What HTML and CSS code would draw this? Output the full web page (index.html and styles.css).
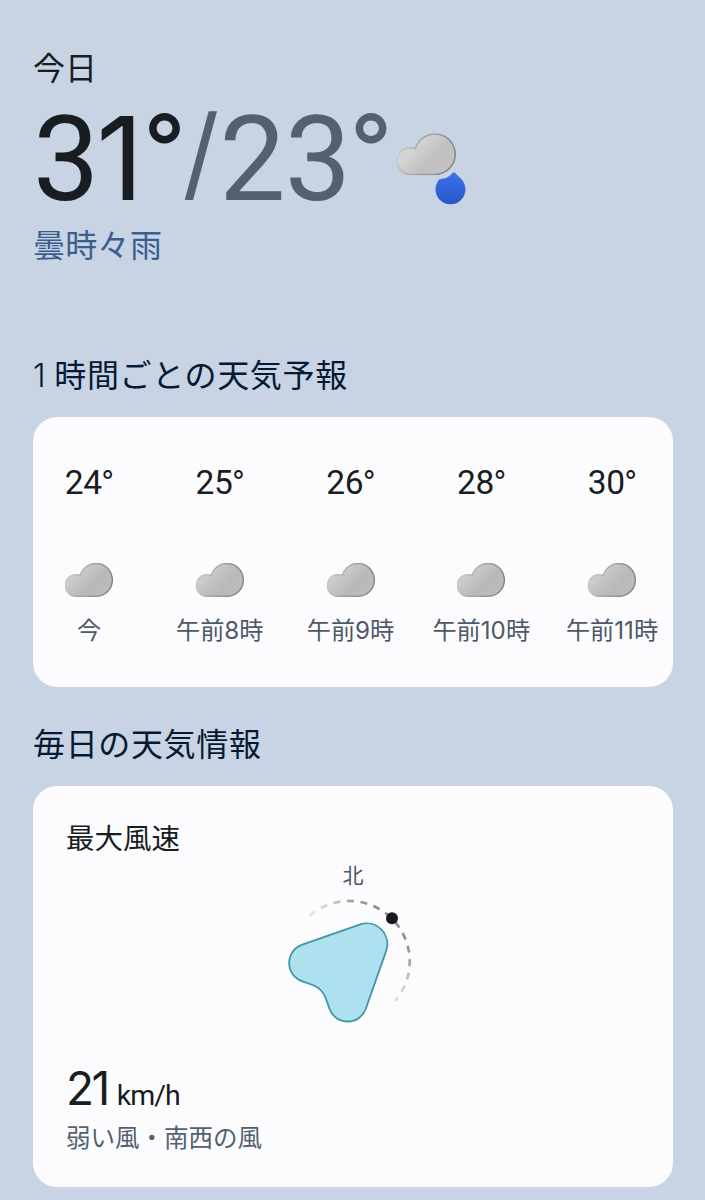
FILE: index.html
```
<!DOCTYPE html>
<html lang="ja">
<head>
    <meta charset="UTF-8">
    <meta name="viewport" content="width=device-width, initial-scale=1.0">
    <title>天気予報</title>
    <link rel="stylesheet" href="styles.css">
</head>
<body>
    <!-- Shared cloud shape -->
    <svg class="defs" aria-hidden="true">
        <defs>
            <linearGradient id="cloud-fill" x1="0" y1="0.1" x2="1" y2="0.8">
                <stop offset="0" stop-color="#d6d6d6"/>
                <stop offset="0.3" stop-color="#cacaca"/>
                <stop offset="0.65" stop-color="#b8b8b8"/>
                <stop offset="1" stop-color="#bebebe"/>
            </linearGradient>
            <linearGradient id="cloud-fill-light" x1="0" y1="0.1" x2="1" y2="0.8">
                <stop offset="0" stop-color="#dedede"/>
                <stop offset="0.35" stop-color="#d2d2d2"/>
                <stop offset="0.65" stop-color="#c0c0c0"/>
                <stop offset="1" stop-color="#c3c3c3"/>
            </linearGradient>
            <linearGradient id="cloud-edge" x1="0" y1="0.3" x2="1" y2="0.5">
                <stop offset="0" stop-color="#cccccc"/>
                <stop offset="0.4" stop-color="#a6a8a9"/>
                <stop offset="1" stop-color="#828586"/>
            </linearGradient>
            <path id="cloud-shape" d="M11 33.3A10.8 10.8 0 1 1 15.2 12.5A16.4 16.4 0 1 1 31 33.3Z"/>
            <symbol id="cloud" viewBox="0 0 48 34">
                <use href="#cloud-shape" fill="url(#cloud-fill)" stroke="url(#cloud-edge)" stroke-width="1.4"/>
            </symbol>
            <symbol id="cloud-light" viewBox="0 0 48 34">
                <use href="#cloud-shape" fill="url(#cloud-fill-light)" stroke="url(#cloud-edge)" stroke-width="1.2"/>
            </symbol>
        </defs>
    </svg>

    <main class="page">
        <section class="today">
            <p class="day">今日</p>
            <div class="now">
                <p class="temps"><span class="high">3<span class="one">1</span><span class="deg">°</span></span><span class="slash">/</span><span class="low">23<span class="deg">°</span></span></p>
                <svg class="now-icon" viewBox="396 132 72 74">
                    <defs>
                        <linearGradient id="drop" x1="0" y1="0" x2="0" y2="1">
                            <stop offset="0" stop-color="#3d73e8"/>
                            <stop offset="1" stop-color="#2657cb"/>
                        </linearGradient>
                    </defs>
                    <use href="#cloud-light" x="396.3" y="133.3" width="60" height="42"/>
                    <path d="M454 172.3Q454.8 172.3 456 173.8L462.5 180.3A15 15 0 1 1 438 181Q439.3 178.8 441.5 178.8C445 178.8 449 176.800 452.300 173.200Q453.300 172.300 454 172.300Z" fill="url(#drop)"/>
                </svg>
            </div>
            <p class="condition">曇時々雨</p>
        </section>

        <h2 class="heading"><span class="count">1</span>時間ごとの天気予報</h2>
        <section class="card hourly">
            <div class="hour">
                <p class="temp">24<span class="deg">°</span></p>
                <svg class="cloud"><use href="#cloud"/></svg>
                <p class="time">今</p>
            </div>
            <div class="hour">
                <p class="temp">25<span class="deg">°</span></p>
                <svg class="cloud"><use href="#cloud"/></svg>
                <p class="time">午前8時</p>
            </div>
            <div class="hour">
                <p class="temp">26<span class="deg">°</span></p>
                <svg class="cloud"><use href="#cloud"/></svg>
                <p class="time">午前9時</p>
            </div>
            <div class="hour">
                <p class="temp">28<span class="deg">°</span></p>
                <svg class="cloud"><use href="#cloud"/></svg>
                <p class="time">午前10時</p>
            </div>
            <div class="hour">
                <p class="temp">30<span class="deg">°</span></p>
                <svg class="cloud"><use href="#cloud"/></svg>
                <p class="time">午前11時</p>
            </div>
        </section>

        <h2 class="heading">毎日の天気情報</h2>
        <section class="card wind">
            <h3 class="wind-title">最大風速</h3>
            <div class="compass">
                <span class="north">北</span>
                <svg class="arrow" viewBox="39 135 420 390">
                    <defs>
                        <!-- fades both ends of the dashed arc -->
                        <linearGradient id="fade" gradientUnits="userSpaceOnUse" x1="118" y1="193" x2="383" y2="458">
                            <stop offset="0" stop-color="#8e8e93" stop-opacity="0.2"/>
                            <stop offset="0.15" stop-color="#8e8e93" stop-opacity="0.8"/>
                            <stop offset="0.3" stop-color="#8e8e93"/>
                            <stop offset="0.7" stop-color="#8e8e93"/>
                            <stop offset="0.85" stop-color="#8e8e93" stop-opacity="0.8"/>
                            <stop offset="1" stop-color="#8e8e93" stop-opacity="0.2"/>
                        </linearGradient>
                    </defs>
                    <path d="M119 197A181.5 181.5 0 0 1 375 453" fill="none" stroke="url(#fade)" stroke-width="8" stroke-dasharray="21 19.7"/>
                    <path d="M271 223L97 284A58 58 0 0 0 97 394L128 405Q156 416 167 444L178 475A58 58 0 0 0 288 475L349 301A62 62 0 0 0 271 223Z" fill="#ade1ef" stroke="#4297a5" stroke-width="5.5"/>
                    <circle cx="366" cy="205" r="18" fill="#17191c"/>
                </svg>
            </div>
            <p class="speed">21<span class="unit">km/h</span></p>
            <p class="wind-note">弱い風・南西の風</p>
        </section>
    </main>
</body>
</html>
```
FILE: styles.css
```
* {
    box-sizing: border-box;
}

body {
    margin: 0;
    height: 1200px;
    overflow: hidden;
    background-color: #c8d3e3;
    font-family: Inter, "Noto Sans CJK JP", sans-serif;
    color: #191c20;
}

p, h2, h3 {
    margin: 0;
    font-weight: 400;
    white-space: nowrap;
}

svg {
    display: block;
}

.defs {
    width: 0;
    height: 0;
    position: absolute;
}

.page {
    padding: 49px 32px 0 33px;
}

.day {
    font-size: 32px;
    line-height: 40px;
}

.now {
    display: flex;
    height: 116px;
    margin-top: 11px;
}

.temps {
    width: 363px;
    padding-top: 2px;
    font-family: Roboto, sans-serif;
    font-size: 118px;
    line-height: 116px;
    letter-spacing: -3px;
}

.one {
    font-family: Inter, sans-serif;
    font-size: 116px;
    line-height: 0;
    letter-spacing: 0;
}

.deg {
    font-family: Inter, sans-serif;
    font-size: 0.78em;
    line-height: 0;
    vertical-align: 0.2em;
}

.temps .deg {
    font-weight: 500;
    vertical-align: 0.215em;
}

.slash {
    font-family: Inter, sans-serif;
    font-size: 102px;
    line-height: 0;
    letter-spacing: 0;
    vertical-align: 11px;
}

.low, .slash {
    color: #53606f;
}

.low {
    letter-spacing: -1px;
}

.now-icon {
    width: 72px;
    height: 74px;
    margin-top: 32px;
}

.condition {
    margin-top: 10px;
    font-size: 32px;
    line-height: 40px;
    letter-spacing: 0.3px;
    color: #3a5f8f;
}

.heading {
    font-size: 32px;
    line-height: 40px;
    letter-spacing: 0.65px;
    color: #041a33;
}

.count {
    margin-right: 8px;
    font-weight: 300;
}

.today + .heading {
    margin-top: 90px;
}

.card {
    width: 640px;
    border-radius: 24px;
    background-color: #fcfcff;
}

.hourly {
    display: flex;
    gap: 18.75px;
    height: 270.5px;
    margin: 20.5px 0 38px;
    padding-top: 46px;
}

.hour {
    display: flex;
    flex-direction: column;
    align-items: center;
    width: 112px;
    flex: none;
}

.temp {
    font-family: Roboto, sans-serif;
    font-size: 33.5px;
    line-height: 40px;
    letter-spacing: -0.4px;
}

.cloud {
    width: 48px;
    height: 34px;
    margin-top: 60.5px;
}

.time {
    margin-top: 18px;
    font-size: 24.2px;
    line-height: 32px;
    color: #4c5967;
}

.wind {
    height: 401px;
    margin-top: 20.5px;
    padding: 33.5px 33px 0;
}

.wind-title {
    font-size: 28.5px;
    line-height: 40px;
}

.compass {
    display: flex;
    flex-direction: column;
    align-items: center;
    margin-top: 6px;
}

.north {
    font-size: 21px;
    line-height: 22px;
    color: #4c5967;
}

.arrow {
    width: 140px;
    height: 130px;
    margin-top: 8px;
}

.speed {
    height: 50px;
    margin-top: 38px;
    font-size: 46px;
    line-height: 50px;
    letter-spacing: -2.5px;
}

.unit {
    margin-left: 9px;
    font-family: Roboto, sans-serif;
    font-size: 28.5px;
    line-height: 0;
    letter-spacing: -1px;
}

.wind-note {
    margin-top: 9px;
    font-size: 24.5px;
    line-height: 32px;
    color: #53606f;
}
```
